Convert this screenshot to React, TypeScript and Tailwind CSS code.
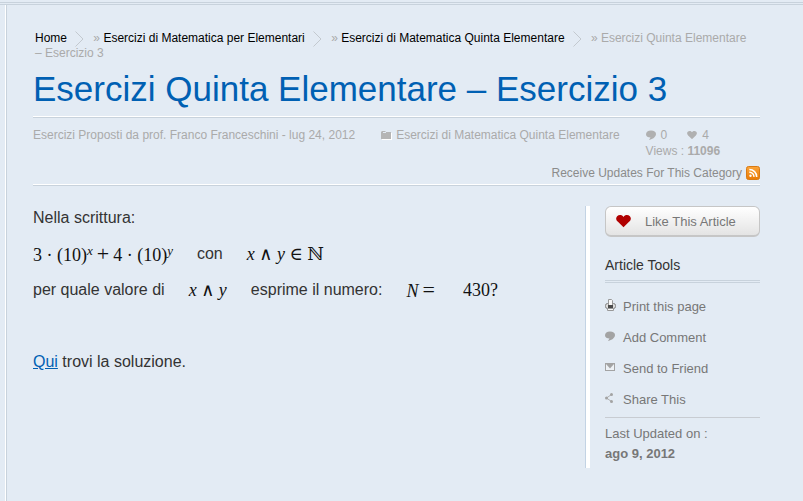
import type { ReactNode } from "react";

const crumbs = [
  "Home",
  "Esercizi di Matematica per Elementari",
  "Esercizi di Matematica Quinta Elementare",
];

function Chevron() {
  return (
    <svg
      className="inline-block align-middle ml-2 mr-[6px] -my-1"
      width="9"
      height="16"
      viewBox="0 0 9 16"
      fill="none"
      stroke="#c3c9cf"
      aria-hidden="true"
    >
      <path d="M0.500 0.500L8 8L0.500 15.500" />
    </svg>
  );
}

function CommentIcon({ color }: { color: string }) {
  return (
    <svg width="10" height="10" viewBox="0 0 10 10" aria-hidden="true">
      <path
        fill={color}
        d="M5 0.500C2 0.500 0 2 0 4.200C0 6.300 2 7.500 4.500 7.500L3 10C5.500 9.500 10 7.500 10 4C10 1.800 8 0.500 5 0.500Z"
      />
    </svg>
  );
}

function HeartIcon({ size, color }: { size: number; color: string }) {
  return (
    <svg
      width={size}
      height={(size * 13) / 16}
      viewBox="0 0 16 13"
      aria-hidden="true"
    >
      <path
        fill={color}
        d="M8 2C6.500-0.500 3-0.500 1.200 1.200C-0.500 3 0 5.500 1.800 7L8 13L14.200 7C16 5.500 16.500 3 14.800 1.200C13-0.500 9.500-0.500 8 2Z"
      />
    </svg>
  );
}

function FolderIcon() {
  return (
    <svg width="11" height="9" viewBox="0 0 11 9" aria-hidden="true">
      <path d="M1 2h10v7H1z" fill="#fff" />
      <path d="M0 1L1 0h3l1 1h5v7H0z" fill="#b5b5b5" />
      <path d="M2 1.500h3" stroke="#e3ebf4" />
    </svg>
  );
}

function RssIcon() {
  return (
    <svg width="14" height="14" viewBox="0 0 14 14" aria-hidden="true">
      <defs>
        <linearGradient id="rss" x1="0" y1="0" x2="0" y2="1">
          <stop offset="0" stopColor="#fba53a" />
          <stop offset="1" stopColor="#e97a05" />
        </linearGradient>
      </defs>
      <rect
        x="0.500"
        y="0.500"
        width="13"
        height="13"
        rx="2"
        fill="url(#rss)"
        stroke="#d97a14"
      />
      <circle cx="4.500" cy="9.700" r="1.200" fill="#fff" />
      <path
        d="M3.300 6.300A4.400 4.400 0 0 1 7.900 10.900M3.300 3.500A7.300 7.300 0 0 1 10.700 10.900"
        fill="none"
        stroke="#fff"
        strokeWidth="1.500"
      />
    </svg>
  );
}

function PrintIcon() {
  return (
    <svg width="11" height="12" viewBox="0 0 11 12" aria-hidden="true">
      <rect x="0.500" y="4.500" width="10" height="5" rx="2" fill="#ddd" stroke="#858585" />
      <path d="M3.500 6V0.500h3l1 1V6" fill="#f7f7f7" stroke="#999" />
      <path d="M3 6h5v3H3z" fill="#4a4a4a" />
      <path d="M2.500 9.500h6v2h-6z" fill="#fafafa" stroke="#999" />
    </svg>
  );
}

function MailIcon() {
  return (
    <svg width="10" height="8" viewBox="0 0 10 8" aria-hidden="true">
      <rect x="0.500" y="0.500" width="9" height="7" fill="#edf1f5" stroke="#a3a3a3" />
      <path d="M1 1h8L5 5.500z" fill="#a3a3a3" />
    </svg>
  );
}

function ShareIcon() {
  return (
    <svg width="10" height="10" viewBox="0 0 10 10" fill="#a3a3a3" aria-hidden="true">
      <path d="M6.500 1.500L1.500 5L6.500 8.500" fill="none" stroke="#b0b0b0" />
      <circle cx="1.500" cy="5" r="1.500" />
      <circle cx="6.500" cy="1.500" r="1.500" />
      <circle cx="6.500" cy="8.500" r="1.500" />
    </svg>
  );
}

function MathText({ children }: { children: ReactNode }) {
  return (
    <span className="font-['Liberation_Serif','DejaVu_Serif',serif] text-[18px] leading-none text-[#111] whitespace-nowrap">
      {children}
    </span>
  );
}

function Op({ children }: { children: ReactNode }) {
  return <span className="mx-1 text-[22px] leading-none">{children}</span>;
}

const tools = [
  { label: "Print this page", icon: <PrintIcon /> },
  { label: "Add Comment", icon: <CommentIcon color="#a3a3a3" /> },
  { label: "Send to Friend", icon: <MailIcon /> },
  { label: "Share This", icon: <ShareIcon /> },
];

export default function App() {
  return (
    <div className="min-h-screen flex flex-col bg-[#e3ebf4] pt-[2px] font-['Liberation_Sans',Arial,sans-serif]">
      <div className="h-[3px] border-y border-[#c8d2dc]" />
      <div className="flex-1 flex">
        <div className="w-[7px] shrink-0 border-r border-[#c8d2dc] flex justify-end">
          <div className="w-px bg-white" />
        </div>
        <main className="flex-1 min-w-0 pl-[26px] pr-[43px] pt-[26px]">
          <nav
            aria-label="Breadcrumb"
            className="px-[2px] text-[12px] leading-[15px] text-[#aaa]"
          >
            {crumbs.map((crumb, i) => (
              <span key={crumb}>
                {i > 0 && "» "}
                <a href="#" className="text-black">
                  {crumb}
                </a>
                <Chevron />{" "}
              </span>
            ))}
            <span>» Esercizi Quinta Elementare</span>{" "}
            <span className="whitespace-nowrap">– Esercizio 3</span>
          </nav>
          <h1 className="mt-[7px] pb-[6px] text-[35px] leading-[42px] text-[#0060b3]">
            Esercizi Quinta Elementare – Esercizio 3
          </h1>

          <div className="border-t border-white">
            <div className="border-t border-[#c8d2dc] pt-[9px] text-[12px] leading-4 text-[#aaa]">
              <div className="flex items-start">
                <span>
                  Esercizi Proposti da prof. Franco Franceschini - lug 24, 2012
                </span>
                <a href="#" className="ml-[26px] flex items-center gap-1">
                  <FolderIcon />
                  Esercizi di Matematica Quinta Elementare
                </a>
                <div className="ml-[26px]">
                  <div className="flex gap-5">
                    <span className="flex items-center gap-[5px]">
                      <CommentIcon color="#b0b0b0" />0
                    </span>
                    <span className="flex items-center gap-[5px]">
                      <HeartIcon size={10} color="#b0b0b0" />4
                    </span>
                  </div>
                  <div>
                    Views : <b>11096</b>
                  </div>
                </div>
              </div>
              <a
                href="#"
                className="mt-[6px] pb-[3px] flex justify-end items-center gap-1 text-[#8b8b8b]"
              >
                Receive Updates For This Category
                <RssIcon />
              </a>
            </div>
          </div>

          <div className="border-t border-white">
            <div className="border-t border-[#c8d2dc] pt-5 flex">
              <article className="flex-1 min-w-0 -mt-[6px] text-[16px] leading-9 text-[#333]">
                <p>Nella scrittura:</p>
                <p className="flex items-center gap-6">
                  <MathText>
                    3 · (10)<sup className="text-[13px] italic">x</sup>
                    <Op>+</Op>4 · (10)
                    <sup className="text-[13px] italic">y</sup>
                  </MathText>
                  <span>con</span>
                  <MathText>
                    <i>x</i> ∧ <i>y</i> ∈ ℕ
                  </MathText>
                </p>
                <p className="flex items-center gap-6">
                  <span>per quale valore di</span>
                  <MathText>
                    <i>x</i> ∧ <i>y</i>
                  </MathText>
                  <span>esprime il numero:</span>
                  <MathText>
                    <i>N</i>
                    <Op>=</Op>
                  </MathText>
                  <MathText>430?</MathText>
                </p>
                <p className="mt-9">
                  <a href="#" className="text-[#0060b3] underline">
                    Qui
                  </a>{" "}
                  trovi la soluzione.
                </p>
              </article>

              <aside className="w-[175px] shrink-0 border-l border-[#c3d3e4] text-[13px] text-[#777]">
                <div className="border-l-4 border-white pl-[15px] pb-[4px]">
                  <button
                    type="button"
                    className="w-full h-[31px] flex items-center gap-[14px] pl-[10px] pt-px rounded-[6px] border border-b-2 border-[#c6c6c6] bg-linear-to-b from-white to-[#e4e4e4]"
                  >
                    <HeartIcon size={15} color="#b00000" />
                    Like This Article
                  </button>
                  <h2 className="mt-[19px] text-[14px] leading-[18px] text-[#333]">
                    Article Tools
                  </h2>
                  <div className="mt-[6px] h-[3px] border-y border-[#c8d2dc]" />
                  <ul className="pt-[8px] pb-[2px]">
                    {tools.map((tool) => (
                      <li key={tool.label} className="h-[31px]">
                        <a href="#" className="flex items-start gap-2 pt-[7px] leading-[18px]">
                          <span className="w-[10px] h-[14px] flex items-center">
                            <span className="shrink-0">{tool.icon}</span>
                          </span>
                          {tool.label}
                        </a>
                      </li>
                    ))}
                  </ul>
                  <div className="border-t border-[#c8ccd2] pt-[6px] leading-5">
                    Last Updated on :<br />
                    <b>ago 9, 2012</b>
                  </div>
                </div>
              </aside>
            </div>
          </div>
        </main>
      </div>
    </div>
  );
}
